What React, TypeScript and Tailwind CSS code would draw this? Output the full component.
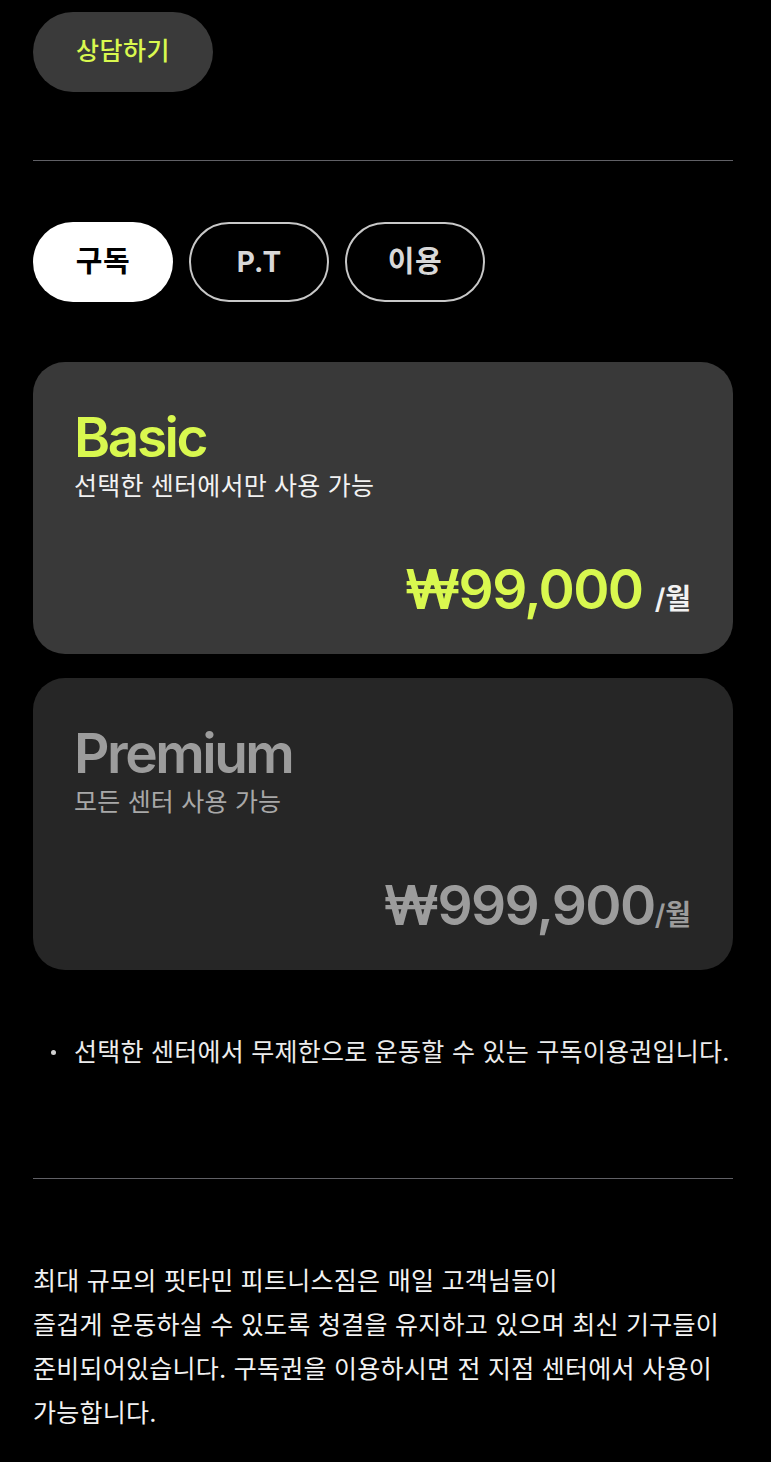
import React from "react";

const font = { fontFamily: 'Inter, "Noto Sans CJK KR", sans-serif' };

function PlanCard({
  title,
  subtitle,
  price,
  active,
}: {
  title: string;
  subtitle: string;
  price: string;
  active: boolean;
}) {
  return (
    <div
      className={`flex h-[292px] flex-col rounded-[32px] pl-[41px] pr-[42px] pt-[48px] pb-[37px] ${
        active ? "bg-[#393939]" : "bg-[#262626]"
      }`}
    >
      <div
        className={`text-[55px] font-semibold leading-[55px] tracking-[-0.045em] ${
          active ? "text-[#d9f84f]" : "text-[#9c9c9c]"
        }`}
      >
        {title}
      </div>
      <div
        className={`mt-[5px] text-[25px] leading-[32px] tracking-[0.2px] ${
          active ? "text-[#f2f2f2]" : "text-[#a8a8a8]"
        }`}
      >
        {subtitle}
      </div>
      <div className="mt-auto flex items-baseline justify-end">
        <span
          className={`whitespace-pre text-[55px] font-semibold leading-[55px] tracking-[-0.03em] ${
            active ? "text-[#d9f84f]" : "text-[#9c9c9c]"
          }`}
        >
          {price}
        </span>
        <span
          className={`text-[28px] font-semibold leading-[28px] ${
            active ? "text-[#f2f2f2]" : "text-[#9c9c9c]"
          }`}
        >
          /월
        </span>
      </div>
    </div>
  );
}

export default function App() {
  return (
    <div className="min-h-[1462px] w-full bg-black" style={font}>
      <div className="ml-[33px] w-[700px] pt-[12px] pb-[30px]">
        <button className="flex h-[80px] w-[180px] items-center justify-center rounded-full bg-[#3a3a3a] text-[25px] font-medium tracking-[0.5px] text-[#d9f84f]">
          상담하기
        </button>

        <div className="mt-[68px] h-px w-full bg-[#606066]" />

        <div className="mt-[61px] flex gap-[16px]">
          <div className="flex h-[80px] w-[140px] items-center justify-center rounded-full bg-white text-[29px] font-bold tracking-[0.5px] text-black">
            구독
          </div>
          <div className="flex h-[80px] w-[140px] items-center justify-center rounded-full border-2 border-[#c8c8c8] text-[28px] font-bold text-[#d8d8d8]">
            P.T
          </div>
          <div className="flex h-[80px] w-[140px] items-center justify-center rounded-full border-2 border-[#c8c8c8] text-[29px] font-bold tracking-[0.5px] text-[#d8d8d8]">
            이용
          </div>
        </div>

        <div className="mt-[60px] flex flex-col gap-[24px]">
          <PlanCard
            title="Basic"
            subtitle="선택한 센터에서만 사용 가능"
            price="₩99,000 "
            active
          />
          <PlanCard
            title="Premium"
            subtitle="모든 센터 사용 가능"
            price="₩999,900"
            active={false}
          />
        </div>

        <ul className="mt-[64px]">
          <li className="flex items-center whitespace-nowrap text-[25px] leading-[36px] tracking-[0.25px] text-[#ececec]">
            <span className="ml-[18px] mr-[18px] h-[5px] w-[5px] shrink-0 rounded-full bg-[#d0d0d0]" />
            선택한 센터에서 무제한으로 운동할 수 있는 구독이용권입니다.
          </li>
        </ul>

        <div className="mt-[108px] h-px w-full bg-[#606066]" />

        <p className="mt-[80px] whitespace-nowrap text-[25px] leading-[44px] tracking-[0.25px] text-[#f2f2f2]">
          최대 규모의 핏타민 피트니스짐은 매일 고객님들이
          <br />
          즐겁게 운동하실 수 있도록 청결을 유지하고 있으며 최신 기구들이
          <br />
          준비되어있습니다. 구독권을 이용하시면 전 지점 센터에서 사용이
          <br />
          가능합니다.
        </p>
      </div>
    </div>
  );
}
